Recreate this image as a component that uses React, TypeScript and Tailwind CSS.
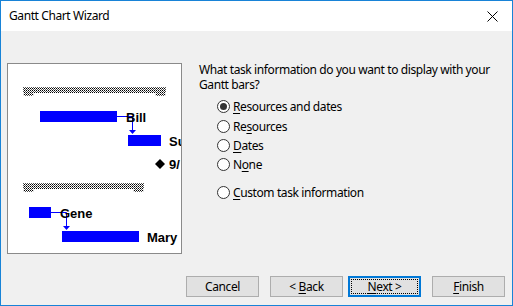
import React from "react";

const font = { fontFamily: '"Noto Sans", "Segoe UI", sans-serif' };

function U({ children }: { children: React.ReactNode }) {
  return <span className="underline underline-offset-2">{children}</span>;
}

function Radio({ checked, children, className = "" }: { checked?: boolean; children: React.ReactNode; className?: string }) {
  return (
    <div className={`flex items-center h-[19px] gap-[3px] ${className}`}>
      <div className="w-[13px] h-[13px] rounded-full border border-[#333333] bg-white flex items-center justify-center shrink-0">
        {checked && <div className="w-[7px] h-[7px] rounded-full bg-[#333333]" />}
      </div>
      <span className="text-[12px] leading-[15px] text-black tracking-[-0.4px]">{children}</span>
    </div>
  );
}

function Btn({ children, def }: { children: React.ReactNode; def?: boolean }) {
  return (
    <div
      className={`relative w-[73px] h-[21px] bg-[#e1e1e1] flex items-center justify-center text-[12px] text-black tracking-[-0.4px] ${
        def ? "border-2 border-[#0078d7]" : "border border-[#adadad]"
      }`}
    >
      {def && <div className="absolute inset-[1px] border border-dotted border-black" />}
      <span className="relative">{children}</span>
    </div>
  );
}

function Hatch({ x1, x2, y }: { x1: number; x2: number; y: number }) {
  return (
    <g>
      <rect x={x1} y={y + 5} width={11} height={4} fill="#e3e3e3" />
      <rect x={x2 - 11} y={y + 5} width={11} height={4} fill="#e3e3e3" />
      <rect x={x1} y={y} width={x2 - x1} height={6} fill="url(#dots)" />
      <rect x={x1 + 1} y={y + 6} width={9} height={3} fill="url(#dots)" />
      <rect x={x2 - 10} y={y + 6} width={9} height={3} fill="url(#dots)" />
    </g>
  );
}

export default function App() {
  const lbl = { fontFamily: '"Liberation Sans", Arial, sans-serif', fontWeight: 700, fontSize: 13 };
  return (
    <div className="w-[513px] h-[306px] border border-[#1883d7] flex flex-col bg-[#f0f0f0]" style={font}>
      <div className="h-[30px] bg-white flex items-center justify-between pl-[8px] pr-[14px] shrink-0">
        <span className="text-[12px] text-black tracking-[-0.4px]">Gantt Chart Wizard</span>
        <svg width="11" height="11" viewBox="0 0 11 11">
          <path d="M0.5 0.5 L10.5 10.5 M10.5 0.5 L0.5 10.5" stroke="#000" strokeWidth="1" />
        </svg>
      </div>
      <div className="flex-1 flex flex-col">
        <div className="flex items-start mt-[32px] ml-[6px]">
          <div className="w-[175px] h-[191px] border border-[#8a8a8a] bg-white overflow-hidden shrink-0">
            <svg width="173" height="189" viewBox="0 0 173 189" className="block">
              <defs>
                <pattern id="dots" width="2" height="2" patternUnits="userSpaceOnUse">
                  <rect width="2" height="2" fill="#ffffff" />
                  <rect x="0" y="0" width="1" height="1" fill="#000" />
                  <rect x="1" y="1" width="1" height="1" fill="#555" />
                </pattern>
              </defs>
              <Hatch x1={15} x2={158} y={23} />
              <rect x={32} y={47} width={77} height={11} fill="#0000ff" />
              <path d="M109 52.5 H124.5 V68" stroke="#0000ff" strokeWidth="1" fill="none" />
              <path d="M121 66 H128 L124.5 70 Z" fill="#0000ff" />
              <rect x={120} y={71} width={33} height={11} fill="#0000ff" />
              <text x={118} y={58} style={lbl} fill="#000">Bill</text>
              <text x={161} y={82} style={lbl} fill="#000">Su</text>
              <path d="M152 95 L157 100 L152 105 L147 100 Z" fill="#000" />
              <text x={161} y={105} style={lbl} fill="#000">9/</text>
              <Hatch x1={15} x2={136} y={119} />
              <rect x={21} y={143} width={22} height={11} fill="#0000ff" />
              <path d="M43 148.5 H58.5 V164" stroke="#0000ff" strokeWidth="1" fill="none" />
              <path d="M55 162 H62 L58.5 166 Z" fill="#0000ff" />
              <rect x={54} y={167} width={77} height={11} fill="#0000ff" />
              <text x={52} y={154} style={lbl} fill="#000">Gene</text>
              <text x={139} y={178} style={lbl} fill="#000">Mary</text>
            </svg>
          </div>
          <div className="ml-[17px] -mt-[1px] flex flex-col">
            <p className="text-[12px] leading-[15px] text-black w-[300px] tracking-[-0.4px]">
              What task information do you want to display with your Gantt bars?
            </p>
            <div className="ml-[18px] mt-[5px] flex flex-col">
              <Radio checked>
                <U>R</U>esources and dates
              </Radio>
              <Radio className="mt-[1px]">
                Re<U>s</U>ources
              </Radio>
              <Radio>
                <U>D</U>ates
              </Radio>
              <Radio>
                N<U>o</U>ne
              </Radio>
              <Radio className="mt-[9px]">
                <U>C</U>ustom task information
              </Radio>
            </div>
          </div>
        </div>
        <div className="mt-auto mb-[8px] flex justify-end pr-[7px]">
          <Btn>Cancel</Btn>
          <div className="ml-[11px]">
            <Btn>
              &lt; <U>B</U>ack
            </Btn>
          </div>
          <div className="ml-[5px]">
            <Btn def>
              <U>N</U>ext &gt;
            </Btn>
          </div>
          <div className="ml-[11px]">
            <Btn>
              <U>F</U>inish
            </Btn>
          </div>
        </div>
      </div>
    </div>
  );
}
